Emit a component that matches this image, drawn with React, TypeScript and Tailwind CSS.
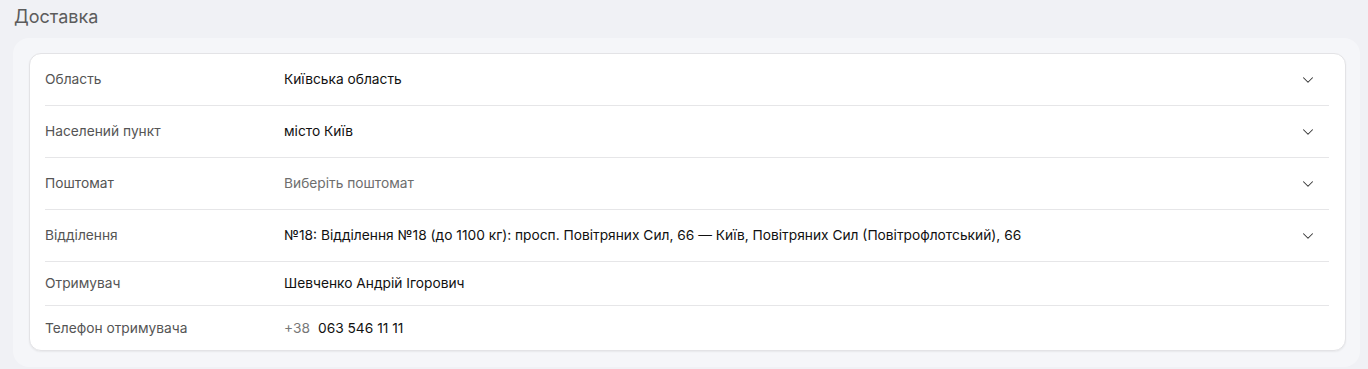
import { ChevronDown } from "lucide-react";

type Row = {
  label: string;
  value: React.ReactNode;
  select?: boolean;
  placeholder?: boolean;
};

const rows: Row[] = [
  { label: "Область", value: "Київська область", select: true },
  { label: "Населений пункт", value: "місто Київ", select: true },
  { label: "Поштомат", value: "Виберіть поштомат", select: true, placeholder: true },
  {
    label: "Відділення",
    value:
      "№18: Відділення №18 (до 1100 кг): просп. Повітряних Сил, 66 — Київ, Повітряних Сил (Повітрофлотський), 66",
    select: true,
  },
  { label: "Отримувач", value: "Шевченко Андрій Ігорович" },
  {
    label: "Телефон отримувача",
    value: (
      <span className="flex items-center gap-2">
        <span className="text-[#777]">+38</span>
        <span>063 546 11 11</span>
      </span>
    ),
  },
];

export default function App() {
  return (
    <div
      className="min-h-[369px] bg-[#f0f1f5] px-[13px] pt-[6px] pb-[2px] text-[13.75px]"
      style={{ fontFamily: "Inter, 'Noto Sans', sans-serif" }}
    >
      <h2 className="ml-px text-[18px] leading-[22px] text-[#5c5c5c]">Доставка</h2>
      <div className="mt-[10px] w-[1347px] rounded-[16px] bg-[#f5f6f9] pt-[15px] pb-4 pl-4 pr-[14px]">
        <div className="rounded-[12px] border border-[#e3e3e6] bg-white pl-[15px] pr-4 shadow-[0_1px_2px_rgba(0,0,0,0.06)]">
          {rows.map((row, i) => (
            <div
              key={row.label}
              className={
                "flex items-center " +
                (row.select ? "h-[52px] " : "h-[44px] ") +
                (i < rows.length - 1 ? "border-b border-[#e6e6e8]" : "")
              }
            >
              <span className="w-[239px] shrink-0 text-[#555]">{row.label}</span>
              <span
                className={
                  "flex-1 " + (row.placeholder ? "text-[#6e6e6e]" : "text-[#111]")
                }
              >
                {row.value}
              </span>
              {row.select && (
                <ChevronDown
                  size={18}
                  strokeWidth={1.4}
                  className="mr-[12px] text-[#333]"
                />
              )}
            </div>
          ))}
        </div>
      </div>
    </div>
  );
}
